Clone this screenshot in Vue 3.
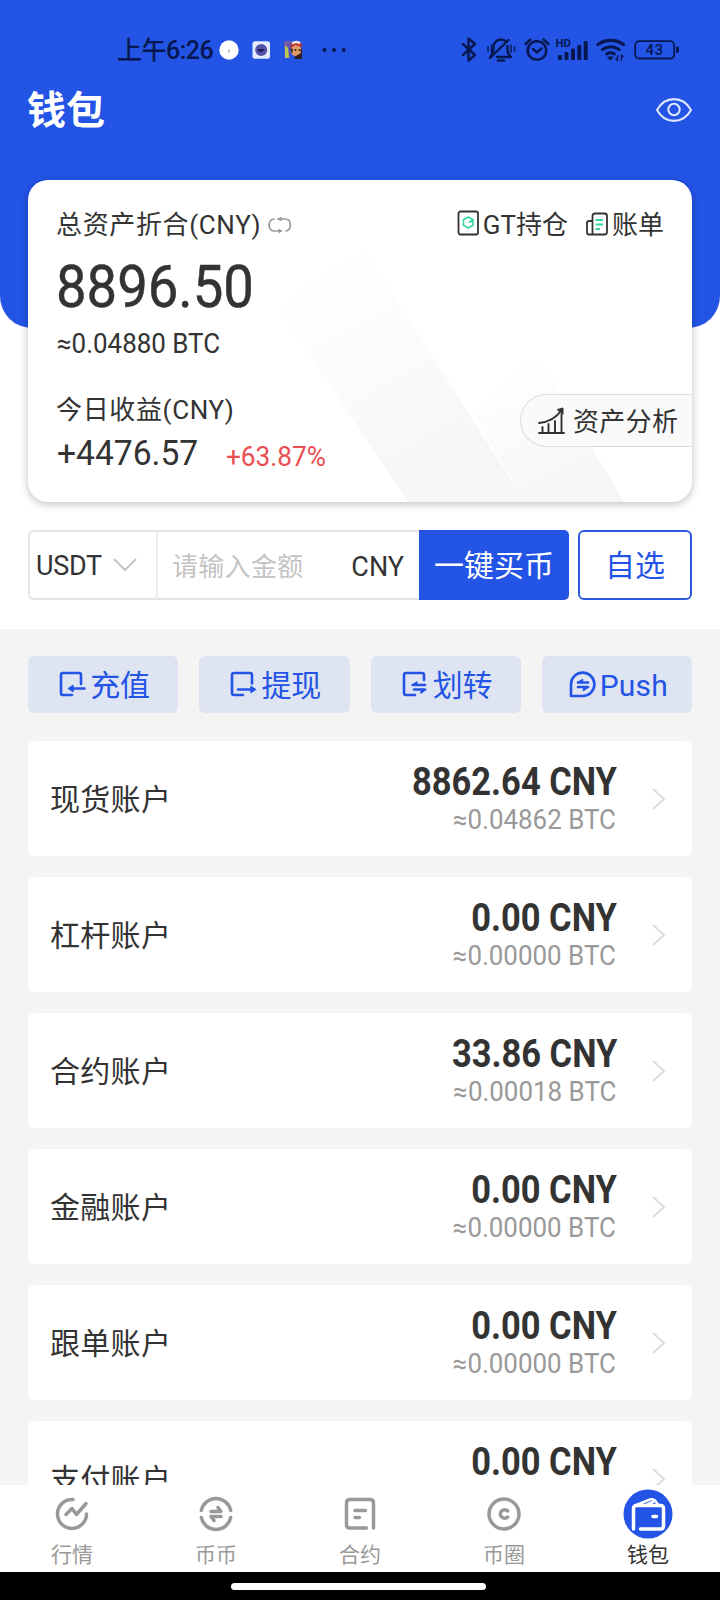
<script setup>
const accounts = [
  { name: '现货账户', cny: '8862.64 CNY', btc: '≈0.04862 BTC' },
  { name: '杠杆账户', cny: '0.00 CNY', btc: '≈0.00000 BTC' },
  { name: '合约账户', cny: '33.86 CNY', btc: '≈0.00018 BTC' },
  { name: '金融账户', cny: '0.00 CNY', btc: '≈0.00000 BTC' },
  { name: '跟单账户', cny: '0.00 CNY', btc: '≈0.00000 BTC' },
  { name: '支付账户', cny: '0.00 CNY', btc: '≈0.00000 BTC' },
]
</script>

<template>
  <div class="page">
    <header class="hero">
      <div class="status">
        <span class="time">上午6:26</span>
        <svg class="apps" width="140" height="24" viewBox="0 0 140 24">
          <circle cx="13" cy="12" r="9.7" fill="#fff" />
          <path d="M13 11v4" stroke="#9aa88c" stroke-width="1" />
          <rect x="36.500" y="3.200" width="17.500" height="17.500" rx="2.500" fill="#e6ecff" />
          <circle cx="45.200" cy="12" r="6" fill="#5552a8" />
          <path d="M41 11h8l-3 3h-3z" fill="#17205c" />
          <path d="M68 3h8l-3 5 1 12h-5z" fill="#7a58a8" />
          <path d="M69 7l3 3 1 10h-4z" fill="#b5c94e" />
          <circle cx="80" cy="12.500" r="5.500" fill="#e59a62" />
          <path d="M74 9q1-6 7-6 5 1 5.500 6l-7-2-5 3z" fill="#c42f2d" />
          <path d="M76 5.500q5-3 8 0" stroke="#f1e3dc" stroke-width="2.500" fill="none" />
          <path d="M74 10l3 1-1 5zM79 18.500l7-4v6.500h-8zM85 9l1.500 5-2 1z" fill="#351d25" />
          <circle cx="79.500" cy="12" r="1" fill="#222" /><circle cx="83.500" cy="12" r="1" fill="#222" />
          <g fill="#07174f"><circle cx="108.500" cy="12" r="2" /><circle cx="118" cy="12" r="2" /><circle cx="127.700" cy="12" r="2" /></g>
        </svg>
        <svg class="sys" width="224" height="28" viewBox="458 36 224 28" fill="none" stroke="#07174f" stroke-width="2.400" stroke-linecap="round" stroke-linejoin="round">
          <path d="M463 44l12 11-6.500 5.500V38.500L475 44l-12 11" />
          <path d="M490.500 56.500c3-3 3-6 3-9.500 0-4 3-7.500 7.500-7.500 2 0 4 1 5.500 2.500M507.500 46v4c0 3 1.500 5 3.500 7H497M508.500 40L490 58" />
          <path d="M498 60.500h6" />
          <path d="M488 47v4M491.500 45v7M511 45v7M514.500 47v4" stroke-width="1.500" />
          <circle cx="537" cy="50.500" r="9.300" stroke-width="2.600" />
          <path d="M533 49l4 3.500 4.500-4M525.500 44l5-4.500M548.500 44l-5-4.500" />
          <g stroke="none" fill="#07174f">
            <rect x="558" y="55" width="4" height="5" rx="1" /><rect x="564.500" y="52" width="4" height="8" rx="1" /><rect x="571" y="48.500" width="4" height="11.500" rx="1" /><rect x="577.300" y="45" width="4" height="15" rx="1" /><rect x="583.700" y="41" width="4" height="19" rx="1" />
            <text x="555.500" y="47" font-size="10.500" font-weight="700" textLength="15.500" lengthAdjust="spacingAndGlyphs">HD</text>
          </g>
          <path d="M598 44.500c7.500-5.500 18-5.500 25.500 0M602.500 49.500c5-3.500 11.500-3.500 16.500 0" stroke-width="3.300" />
          <path d="M606.500 54c2.500-1.500 5.500-1.500 8 0" stroke-width="3" />
          <path d="M608 57h5l-2.500 3z" fill="#07174f" stroke-width="1" />
          <path d="M617.500 55.500v5l-1.500-1.500M621.500 60v-5l1.500 1.500" stroke-width="1.400" />
          <rect x="635.200" y="41.200" width="39" height="17.300" rx="4" stroke-width="1.800" />
          <path d="M677.500 48v3.500" stroke-width="2.800" />
          <text x="645.500" y="55.300" font-size="15" font-weight="500" textLength="17.500" stroke="none" fill="#07174f">43</text>
        </svg>
      </div>
      <div class="heading">
        <h1>钱包</h1>
        <svg width="38" height="28" viewBox="0 0 38 28" fill="none" stroke="#dfe7ff" stroke-width="2.100">
          <path d="M2 14C10-.5 28-.5 36 14 28 28.500 10 28.500 2 14z" stroke-linejoin="round" /><circle cx="19" cy="13.500" r="5.700" />
        </svg>
      </div>
    </header>

    <section class="card">
      <svg class="mark" width="664" height="322" viewBox="28 180 664 322">
        <defs>
          <linearGradient id="band" x1="0" y1="0" x2="0.500" y2="1"><stop offset="0.150" stop-color="#f6f6f6" stop-opacity="0" /><stop offset="1" stop-color="#f6f6f6" /></linearGradient>
        </defs>
        <path d="M280 310L357 238 525 502H408z" fill="url(#band)" />
        <path d="M474 416L536 352 624 502H525z" fill="url(#band)" />
      </svg>
      <div class="line top">
        <span class="wide">总资产折合(CNY)</span>
        <svg class="swap" width="24" height="18" viewBox="0 0 24 18" fill="none" stroke="#999" stroke-width="1.700" stroke-linecap="round">
          <path d="M6 3C-.5 3-.5 15 6 15h7M10 3h7c7 0 7 10.500 1 12" /><path d="M9 3l4.500-2.500v5zM14.500 15l-4-2.500v5z" fill="#999" stroke="none" />
        </svg>
        <svg class="gt" width="23" height="26" viewBox="0 0 23 26" fill="none">
          <rect x="1.500" y="1.500" width="19.500" height="23" rx="2" stroke="#333" stroke-width="1.800" />
          <path d="M15.500 9.500L11.300 7 6.500 9.800v5.500l4.800 2.700 4.700-2.700v-3.500h-3l4-2.500" stroke="#35d6a0" stroke-width="1.600" />
        </svg>
        <span class="gtl">GT持仓</span>
        <svg class="bill" width="22" height="24" viewBox="0 0 22 24" fill="none" stroke="#333" stroke-width="1.800">
          <path d="M6.500 22.500V4q0-2.500 2.500-2.500h9.500Q21 1.500 21 4v16q0 2.500-2.500 2.500H3q-2 0-2-2V11q0-2 2-2h3.500" /><path d="M9.500 8H17M9.500 12.500H17M9.500 17h4.500" stroke="#35d6a0" stroke-width="1.800" />
        </svg>
        <span>账单</span>
      </div>
      <div class="total"><span class="nar">8896.50</span></div>
      <div class="btc"><span class="nar95">≈0.04880 BTC</span></div>
      <div class="line today"><span class="wide">今日收益(CNY)</span></div>
      <div class="gain"><b>+4476.57</b><i>+63.87%</i></div>
      <div class="analysis">
        <svg width="28" height="28" viewBox="0 0 28 28" fill="none" stroke="#333" stroke-width="1.900" stroke-linecap="round">
          <path d="M1 26h25M4.500 25v-5M10.500 25v-8M17 25V14M23.500 25V7M1 16C12 15 19 10 24 2.500" /><path d="M19.500 2.500l5.500-1.500v6z" fill="#333" stroke-width="1" />
        </svg>
        <span>资产分析</span>
      </div>
    </section>

    <section class="buy">
      <div class="coin"><span>USDT</span>
        <svg width="26" height="16" viewBox="0 0 26 16" fill="none" stroke="#c4c4c4" stroke-width="2"><path d="M2 2l11 11L24 2" /></svg>
      </div>
      <div class="amount"><span class="ph">请输入金额</span><span class="unit">CNY</span></div>
      <div class="primary">一键买币</div>
      <div class="outline">自选</div>
    </section>

    <main>
      <div class="actions">
        <div class="act">
          <svg width="27" height="27" viewBox="0 0 27 27"><path d="M22 13V4q0-2-2-2H4Q2 2 2 4v18q0 2 2 2h9M25.500 17.500H12" /><path d="M9.500 17.500l4.500-3v6z" class="f" /></svg><span>充值</span>
        </div>
        <div class="act">
          <svg width="27" height="27" viewBox="0 0 27 27"><path d="M22 12.500V4q0-2-2-2H4Q2 2 2 4v18q0 2 2 2h9M8 18.500h14" /><path d="M25.500 18.500L21 15.500v6z" class="f" /></svg><span>提现</span>
        </div>
        <div class="act">
          <svg width="27" height="27" viewBox="0 0 27 27"><path d="M22 9V4q0-2-2-2H4Q2 2 2 4v18q0 2 2 2h9M11 14h12M12 18.500h10" /><path d="M10 14l5-3v3zM24 18.500l-5 3.500v-3.500z" class="f" /></svg><span>划转</span>
        </div>
        <div class="act p">
          <svg width="27" height="27" viewBox="0 0 27 27"><path d="M2 25V13.500A11.700 11.700 0 1 1 13.700 25z" /><path d="M9 11.500h10M9 16h10" /><path d="M8.500 11.500l5-3v3zM19.500 16l-5 3.500V16z" class="f" /></svg><span class="push">Push</span>
        </div>
      </div>
      <div v-for="a in accounts" :key="a.name" class="row">
        <span class="name">{{ a.name }}</span>
        <div class="vals"><div class="cny">{{ a.cny }}</div><div class="sub">{{ a.btc }}</div></div>
        <svg width="14" height="22" viewBox="0 0 14 22" fill="none" stroke="#dadada" stroke-width="1.800"><path d="M1 1l11 10L1 21" /></svg>
      </div>
    </main>

    <nav>
      <div class="tab">
        <svg width="50" height="50" viewBox="0 0 50 50"><path d="M26 10.500A14.500 14.500 0 1 0 39.500 25" /><path d="M19 25.500l6-6 4.500 6L39 14.500" /></svg><span>行情</span>
      </div>
      <div class="tab">
        <svg width="50" height="50" viewBox="0 0 50 50"><path d="M10.300 21.500a15 15 0 0 1 29.400 0M10.300 28.500a15 15 0 0 0 29.400 0" /><path d="M20 22.500h10l-3-4M30 27.500H20l3 4" /></svg><span>币币</span>
      </div>
      <div class="tab">
        <svg width="50" height="50" viewBox="0 0 50 50"><path d="M38.500 39V14q0-3.500-3.500-3.500H15q-3.500 0-3.500 3.500v22q0 3 3 3h17M20 21.500h10.500M20 28.500h4.500" /></svg><span>合约</span>
      </div>
      <div class="tab">
        <svg width="50" height="50" viewBox="0 0 50 50"><circle cx="25" cy="25" r="15" /><path d="M28.700 22A4.300 4.300 0 1 0 28.700 28" stroke-width="3.500" /></svg><span>币圈</span>
      </div>
      <div class="tab on">
        <svg width="50" height="50" viewBox="0 0 50 50"><circle cx="25" cy="25" r="24.500" class="disc" /><path d="M10.500 40V19.500q0-3 3.500-3h23.500q3 0 3 3V37q0 3-3 3H17.500M30 27.500h3.500" /><path d="M12 16.500L27 10.500q3-1 5 1l3 4M24 15.500l6-2.500" stroke-width="2.500" /></svg><span>钱包</span>
      </div>
    </nav>
    <footer><div class="home"></div></footer>
  </div>
</template>

<style>
body { margin: 0; }
</style>
<style scoped>
.page { width: 720px; height: 1600px; overflow: hidden; display: flex; flex-direction: column; background: #fff; color: #333; font-family: Roboto, "Noto Sans CJK SC", sans-serif; }
.page svg { display: block; flex: none; }
.page span { white-space: nowrap; }
.hero { height: 328px; flex: none; background: #2354e6; border-radius: 0 0 32px 32px; }
.status { height: 64px; padding: 36px 38px 0 117px; display: flex; align-items: flex-start; box-sizing: border-box; color: #07174f; }
.time { font-size: 25px; line-height: 28px; width: 99px; font-weight: 500; letter-spacing: -.5px; padding-top: 1px; }
.apps { margin-top: 2px; }
.sys { margin-left: auto; }
.heading { padding: 19px 27px 0 27px; display: flex; justify-content: space-between; align-items: center; }
.heading svg { margin-top: -2px; }
h1 { margin: 0; font-size: 39px; line-height: 56px; font-weight: 700; color: #fff; }
.card { position: relative; margin: -148px 28px 0; height: 322px; flex: none; box-sizing: border-box; border-radius: 20px; background: #fff; box-shadow: 0 2px 9px rgba(0, 0, 0, .25); padding: 26px 28px 0; }
.mark { position: absolute; left: 0; top: 0; }
.line { position: relative; display: flex; align-items: center; font-size: 26px; line-height: 36px; height: 36px; }
.wide { letter-spacing: .65px; }
.top { padding-top: 1px; }
.swap { margin-left: 7px; }
.gt { margin-left: auto; margin-top: -5px; }
.gtl { margin-left: 3px; }
.bill { margin: -2px 4px 0 18px; }
.total { margin-top: 9px; height: 70px; line-height: 70px; font-size: 60px; font-weight: 400; -webkit-text-stroke: .5px #333; }
.nar, .nar95 { display: inline-block; transform: scaleX(.907); transform-origin: left; }
.nar95 { transform: scaleX(.96); }
.btc { height: 36px; line-height: 36px; font-size: 27px; margin-top: 4px; margin-left: 1px; }
.today { margin-top: 30px; }
.gain { display: flex; align-items: baseline; height: 44px; line-height: 44px; margin: 4px 0 0 1px; position: relative; }
.gain b { font-size: 35px; font-weight: 400; width: 169px; transform: scaleX(.96); transform-origin: left; }
.gain i { font-size: 27px; font-style: normal; color: #e94e50; transform: translateY(1px) scaleX(.97); transform-origin: left; }
.analysis { position: absolute; right: 0; top: 214px; width: 172px; height: 53px; box-sizing: border-box; border: 1px solid #ddd; border-right: 0; border-radius: 27px 0 0 27px; background: #fafafa; display: flex; align-items: center; gap: 7px; padding-left: 17px; font-size: 26px; }
.analysis span { margin-top: -2px; letter-spacing: .3px; }
.buy { margin: 28px 28px 0; height: 70px; flex: none; display: flex; }
.coin, .amount { box-sizing: border-box; border: 2px solid #e3e3e3; display: flex; align-items: center; font-size: 27px; }
.coin { width: 128px; border-radius: 6px 0 0 6px; padding-left: 6px; gap: 10px; border-right: 0; }
.coin span { margin-top: 1px; }
.coin span { letter-spacing: -.3px; }
.amount { width: 263px; border-right: 0; border-left-color: #eee; padding: 0 15px 0 14px; justify-content: space-between; }
.ph { color: #c3c3c3; font-size: 26px; margin-top: -2px; letter-spacing: .3px; }
.unit { margin-top: 3px; }
.primary { width: 150px; background: #2354e6; color: #fff; border-radius: 0 5px 5px 0; text-align: center; font-size: 30px; line-height: 71px; }
.outline { margin-left: 9px; width: 114px; box-sizing: border-box; border: 2px solid #2e5ae0; border-radius: 6px; color: #2354e6; text-align: center; font-size: 30px; line-height: 67px; }
main { margin-top: 29px; height: 856px; flex: none; overflow: hidden; background: #f4f4f4; padding: 27px 28px 0; box-sizing: border-box; }
.actions { display: grid; grid-template-columns: repeat(4, 1fr); gap: 21px; height: 57px; margin-bottom: 28px; }
.act { background: #dfe4f3; border-radius: 6px; color: #2354e6; font-size: 30px; display: flex; align-items: center; justify-content: center; gap: 4px; padding-left: 3px; }
.act span { margin-top: -3px; }
.act .push { margin-top: 1px; letter-spacing: .2px; }
.act svg { fill: none; stroke: #2354e6; stroke-width: 2.6; stroke-linecap: round; stroke-linejoin: round; }
.act .f { fill: #2354e6; stroke-width: 1.4; }
.row { height: 115px; margin-bottom: 21px; box-sizing: border-box; background: #fff; border-radius: 6px; padding: 0 26px 0 22px; display: flex; align-items: center; }
.name { font-size: 30px; margin-top: -4px; letter-spacing: .3px; }
.vals { margin-left: auto; margin-right: 35px; text-align: right; }
.cny { font-size: 38px; line-height: 43px; font-weight: 700; transform: scaleX(.907); transform-origin: right; }
.sub { font-size: 27px; line-height: 32px; color: #999; transform: translateX(-1px) scaleX(.96); transform-origin: right; }
nav { height: 87px; flex: none; background: #fff; display: flex; }
.tab { flex: 1; display: flex; flex-direction: column; align-items: center; padding-top: 4px; color: #999; font-size: 21px; line-height: 30px; }
.tab svg { fill: none; stroke: #999; stroke-width: 3.5; stroke-linecap: round; stroke-linejoin: round; }
.tab span { margin-top: 1px; }
.on { color: #333; }
.on svg { stroke: #fff; }
.on .disc { fill: #2354e6; stroke: none; }
footer { height: 28px; flex: none; background: #000; display: flex; padding-left: 231px; }
.home { width: 255px; height: 7px; margin-top: 11px; border-radius: 4px; background: #fff; }
</style>
